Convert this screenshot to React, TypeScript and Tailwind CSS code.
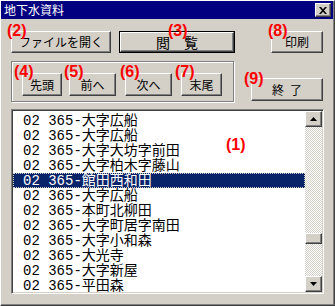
import React from "react";

const font = "font-['Noto_Sans_CJK_JP','Noto_Sans_CJK_SC',sans-serif]";
const btn =
  "flex items-center justify-center bg-[#d4d0c8] border border-t-white border-l-white border-r-[#404040] border-b-[#404040] shadow-[inset_-1px_-1px_0_#808080] text-[12px] text-black leading-none";
const label =
  "absolute text-[16px] leading-none font-bold text-[#ff0000] font-['Liberation_Sans',Arial,sans-serif]";

const items = [
  "大字広船",
  "大字広船",
  "大字大坊字前田",
  "大字柏木字藤山",
  "館田西和田",
  "大字広船",
  "本町北柳田",
  "大字町居字南田",
  "大字小和森",
  "大光寺",
  "大字新屋",
  "平田森",
];

function Arrow({ up }: { up?: boolean }) {
  return (
    <svg width="7" height="4" viewBox="0 0 7 4">
      {up ? (
        <polygon points="3.5,0 7,4 0,4" fill="#000" />
      ) : (
        <polygon points="0,0 7,0 3.5,4" fill="#000" />
      )}
    </svg>
  );
}

export default function App() {
  return (
    <div
      className={`relative w-[335px] h-[306px] bg-[#d4d0c8] border-l border-t border-l-white border-t-white border-r border-b border-r-[#404040] border-b-[#404040] shadow-[inset_-1px_-1px_0_#808080] flex flex-col ${font}`}
    >
      {/* title bar */}
      <div className="h-[18px] mr-[1px] bg-[#000080] flex items-center justify-between pl-[3px] pr-[2px]">
        <span className="text-white text-[12px] leading-none">地下水資料</span>
        <div className={`${btn} w-[16px] h-[14px]`}>
          <svg width="8" height="7" viewBox="0 0 8 7">
            <path d="M0 0h2l2 2.2L6 0h2L5 3.5 8 7H6L4 4.8 2 7H0l3-3.5z" fill="#000" />
          </svg>
        </div>
      </div>

      {/* row 1 */}
      <div className="flex mt-[12px] ml-[10px]">
        <div className={`${btn} w-[100px] h-[22px]`}>ファイルを開く</div>
        <div className="ml-[8px] w-[116px] h-[22px] border border-black flex">
          <div className={`${btn} flex-1 text-[14px]`}>閲　覧</div>
        </div>
        <div className={`${btn} ml-[36px] w-[52px] h-[22px]`}>印刷</div>
      </div>

      {/* row 2 */}
      <div className="flex items-start mt-[8px] ml-[10px]">
        <div className="w-[223px] h-[41px] border border-[#808080] shadow-[inset_1px_1px_0_#fff,1px_1px_0_#fff] flex items-start pl-[10px] pt-[11px]">
          <div className={`${btn} w-[40px] h-[23px]`}>先頭</div>
          <div className={`${btn} ml-[7px] w-[47px] h-[23px]`}>前へ</div>
          <div className={`${btn} ml-[9px] w-[47px] h-[23px]`}>次へ</div>
          <div className={`${btn} ml-[9px] w-[41px] h-[23px]`}>末尾</div>
        </div>
        <div className={`${btn} ml-[17px] mt-[17px] w-[72px] h-[23px]`}>終{"\u2002"}了</div>
      </div>

      {/* list box */}
      <div className="mt-[7px] ml-[10px] w-[313px] h-[185px] border border-t-[#808080] border-l-[#808080] border-r-white border-b-white shadow-[inset_1px_1px_0_#404040,inset_-1px_-1px_0_#d4d0c8] p-[1px] flex">
        <div className="flex-1 bg-white pt-[2px] overflow-hidden">
          {items.map((t, i) => (
            <div
              key={i}
              className={`h-[15px] pl-[10px] flex items-center whitespace-nowrap text-[14px] leading-none font-['Liberation_Mono','Noto_Sans_CJK_JP',monospace] ${
                i === 4
                  ? "bg-[#0a246a] text-white outline-1 outline-dotted outline-[#d4d0c8] -outline-offset-1"
                  : "text-black"
              }`}
            >
              02 365-{t}
            </div>
          ))}
        </div>
        <div className="w-[17px] flex flex-col">
          <div className={`${btn} h-[16px]`}>
            <Arrow up />
          </div>
          <div className="flex-1 bg-[image:repeating-conic-gradient(#ffffff_0%_25%,#d4d0c8_0%_50%)] bg-[length:2px_2px] flex flex-col">
            <div className={`${btn} mt-[106px] h-[11px]`} />
          </div>
          <div className={`${btn} h-[16px]`}>
            <Arrow />
          </div>
        </div>
      </div>

      {/* annotation labels */}
      <span className={`${label} left-[6px] top-[22px]`}>(2)</span>
      <span className={`${label} left-[167px] top-[22px]`}>(3)</span>
      <span className={`${label} left-[267px] top-[22px]`}>(8)</span>
      <span className={`${label} left-[13px] top-[63px]`}>(4)</span>
      <span className={`${label} left-[63px] top-[63px]`}>(5)</span>
      <span className={`${label} left-[119px] top-[63px]`}>(6)</span>
      <span className={`${label} left-[174px] top-[63px]`}>(7)</span>
      <span className={`${label} left-[243px] top-[70px]`}>(9)</span>
      <span className={`${label} left-[225px] top-[136px]`}>(1)</span>
    </div>
  );
}
